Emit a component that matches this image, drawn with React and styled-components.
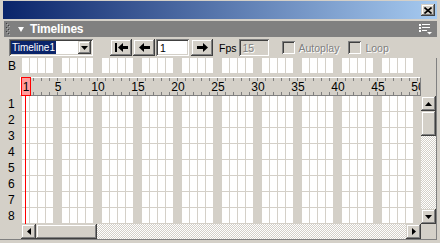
import React from 'react';
import styled, { createGlobalStyle } from 'styled-components';

const FACE = '#d4d0c8';
const SHADOW = '#808080';
const DARK = '#404040';
const FRAMES = 50;

const GlobalStyle = createGlobalStyle`
  html, body {
    margin: 0;
    padding: 0;
    background: ${FACE};
  }
  body {
    font-family: "Liberation Sans", Arial, sans-serif;
  }
  * {
    box-sizing: border-box;
  }
`;

const raised = `box-shadow: inset -1px -1px ${DARK}, inset 1px 1px ${FACE}, inset -2px -2px ${SHADOW}, inset 2px 2px #fff;`;
const sunken = `box-shadow: inset 1px 1px ${SHADOW}, inset -1px -1px #fff, inset 2px 2px ${DARK}, inset -2px -2px ${FACE};`;

const Window = styled.div`
  width: 440px;
  height: 243px;
  background: ${FACE};
  overflow: hidden;
  display: flex;
  flex-direction: column;
  padding-top: 1px;
`;

const TitleBar = styled.div`
  height: 18px;
  margin: 0 3px;
  background: linear-gradient(to right, #0a246a, #a6caf0);
  display: flex;
  align-items: center;
  justify-content: flex-end;
  padding-right: 2px;
`;

const CloseButton = styled.div`
  width: 14px;
  height: 12px;
  background: ${FACE};
  ${raised}
  display: flex;
  align-items: center;
  justify-content: center;
`;

const PanelHeader = styled.div`
  height: 16px;
  margin: 2px 3px 0 4px;
  background: ${SHADOW};
  display: flex;
  align-items: center;
  padding: 0 5px 0 2px;
`;

const Caret = styled.div`
  width: 0;
  height: 0;
  margin-left: 8px;
  border-left: 3.5px solid transparent;
  border-right: 3.5px solid transparent;
  border-top: 5px solid #fff;
`;

const PanelTitle = styled.div`
  margin-left: 6px;
  color: #fff;
  font-weight: bold;
  font-size: 12px;
  letter-spacing: -0.2px;
  flex: 1;
`;

const Toolbar = styled.div`
  height: 21px;
  display: flex;
  align-items: center;
  padding-left: 9px;
`;

const Select = styled.div`
  width: 84px;
  height: 17px;
  background: #fff;
  ${sunken}
  display: flex;
  padding: 2px;
`;

const SelectValue = styled.div`
  flex: 1;
  display: flex;
  align-items: center;
  font-size: 10px;
`;

const Highlight = styled.span`
  background: #0a246a;
  color: #fff;
  padding: 0 1px;
  line-height: 13px;
`;

const DropButton = styled.div`
  width: 13px;
  height: 13px;
  background: ${FACE};
  ${raised}
  display: flex;
  align-items: center;
  justify-content: center;
`;

const NavButton = styled.div`
  width: 22px;
  height: 17px;
  margin-left: ${(p) => p.$gap}px;
  background: ${FACE};
  ${raised}
  display: flex;
  align-items: center;
  justify-content: center;
`;

const Field = styled.div`
  width: ${(p) => p.$w}px;
  height: 17px;
  margin-left: ${(p) => p.$gap}px;
  background: ${(p) => (p.$disabled ? FACE : '#fff')};
  ${sunken}
  display: flex;
  align-items: center;
  padding-left: 4px;
  font-size: 10.5px;
  color: ${(p) => (p.$disabled ? SHADOW : '#000')};
  text-shadow: ${(p) => (p.$disabled ? '1px 1px #fff' : 'none')};
`;

const Label = styled.span`
  margin-left: ${(p) => p.$gap}px;
  font-size: 10.5px;
  color: ${(p) => (p.$disabled ? SHADOW : '#000')};
  text-shadow: ${(p) => (p.$disabled ? '1px 1px #fff' : 'none')};
`;

const Checkbox = styled.div`
  width: 13px;
  height: 13px;
  margin-left: ${(p) => p.$gap}px;
  background: ${FACE};
  ${sunken}
`;

const Body = styled.div`
  position: relative;
  display: grid;
  grid-template-columns: 22px 399px 15px;
  grid-template-rows: 16px 3px 19px 128px 15px;
  width: 437px;
  border-right: 1px solid ${SHADOW};
  border-bottom: 1px solid ${SHADOW};
`;

const RowLabel = styled.div`
  height: 16px;
  display: flex;
  align-items: center;
  padding-left: 8px;
  font-size: 12px;
  color: #000;
`;

const LabelColumn = styled.div`
  grid-column: 1;
  grid-row: ${(p) => p.$row};
  display: flex;
  flex-direction: column;
`;

const FrameStrip = styled.div`
  grid-column: 2;
  grid-row: ${(p) => p.$row};
  display: flex;
  overflow: hidden;
`;

const FrameCol = styled.div`
  width: 8px;
  flex-shrink: 0;
  border-right: 1px solid ${FACE};
  background: ${(p) =>
    p.$key ? FACE : `repeating-linear-gradient(to bottom, #fff 0 15px, ${FACE} 15px 16px)`};
`;

const Ruler = styled.div`
  grid-column: 2;
  grid-row: 3;
  margin-left: -2px;
  border: 1px solid;
  border-color: #fff ${SHADOW} ${SHADOW} #fff;
  padding-left: 1px;
  overflow: hidden;
  background: ${FACE};
`;

const tick = `linear-gradient(to right, transparent 3px, ${SHADOW} 3px 4px, transparent 4px)`;

const RulerScale = styled.div`
  display: flex;
  height: 100%;
  background-image: ${tick}, ${tick};
  background-size: 8px 3px;
  background-repeat: repeat-x;
  background-position: left top, left bottom;
`;

const RulerCell = styled.div`
  width: 8px;
  flex-shrink: 0;
  display: flex;
  align-items: center;
  justify-content: center;
  font-size: 12px;
  white-space: nowrap;
`;

const ScrollV = styled.div`
  grid-column: 3;
  grid-row: 4;
  display: flex;
  flex-direction: column;
`;

const ScrollH = styled.div`
  grid-column: 2;
  grid-row: 5;
  margin-left: -1px;
  display: flex;
`;

const ScrollButton = styled.div`
  width: 15px;
  height: 15px;
  flex-shrink: 0;
  background: ${FACE};
  ${raised}
  display: flex;
  align-items: center;
  justify-content: center;
`;

const Thumb = styled.div`
  flex-shrink: 0;
  width: ${(p) => (p.$horizontal ? '61px' : '15px')};
  height: ${(p) => (p.$horizontal ? '15px' : '25px')};
  background: ${FACE};
  ${raised}
`;

const Track = styled.div`
  flex: 1;
  background: repeating-conic-gradient(#fff 0 25%, ${FACE} 0 50%) 0 0 / 2px 2px;
`;

const PlayheadBox = styled.div`
  position: absolute;
  left: 21px;
  top: 19px;
  width: 10px;
  height: 19px;
  border: 1px solid #ff0000;
  background: #ff9c9c;
  display: flex;
  align-items: center;
  justify-content: center;
  font-size: 12px;
`;

const PlayheadLine = styled.div`
  position: absolute;
  left: 25px;
  top: 38px;
  width: 1px;
  height: 128px;
  background: #ff0000;
`;

const Grip = () => (
  <svg width="4" height="13" viewBox="0 0 4 13">
    {[0, 2, 4, 6, 8, 10].map((y, i) => (
      <g key={y}>
        <rect x={i % 2 ? 2 : 0} y={y} width="1" height="1" fill={DARK} />
        <rect x={i % 2 ? 3 : 1} y={y + 1} width="1" height="1" fill="#b0b0b0" />
      </g>
    ))}
  </svg>
);

const OptionsIcon = () => (
  <svg width="13" height="11" viewBox="0 0 13 11" fill="#fff">
    <rect x="0" y="0" width="2" height="2" />
    <rect x="3" y="0" width="8" height="1" />
    <rect x="0" y="3" width="2" height="2" />
    <rect x="3" y="3" width="8" height="1" />
    <rect x="0" y="6" width="2" height="2" />
    <rect x="3" y="6" width="5" height="1" />
    <path d="M8 8 H13 L10.5 10.5 Z" />
  </svg>
);

const CloseIcon = () => (
  <svg width="8" height="7" viewBox="0 0 8 7">
    <path d="M0.5 0.5 L7.5 6.5 M7.5 0.5 L0.5 6.5" stroke="#000" strokeWidth="1.6" />
  </svg>
);

const Triangle = ({ dir }) => {
  const d = {
    down: 'M0 0 H7 L3.5 4 Z',
    up: 'M0 4 H7 L3.5 0 Z',
    left: 'M4 0 V7 L0 3.5 Z',
    right: 'M0 0 V7 L4 3.5 Z',
  }[dir];
  const vertical = dir === 'up' || dir === 'down';
  return (
    <svg width={vertical ? 7 : 4} height={vertical ? 4 : 7} viewBox={vertical ? '0 0 7 4' : '0 0 4 7'}>
      <path d={d} fill="#000" />
    </svg>
  );
};

const FirstIcon = () => (
  <svg width="13" height="9" viewBox="0 0 13 9" fill="#000">
    <rect x="0" y="0" width="2" height="9" />
    <path d="M3 4.5 L8 0 V9 Z" />
    <rect x="8" y="3" width="5" height="3" />
  </svg>
);

const PrevIcon = () => (
  <svg width="11" height="9" viewBox="0 0 11 9" fill="#000">
    <path d="M0 4.5 L5 0 V9 Z" />
    <rect x="5" y="3" width="6" height="3" />
  </svg>
);

const NextIcon = () => (
  <svg width="11" height="9" viewBox="0 0 11 9" fill="#000">
    <path d="M11 4.5 L6 0 V9 Z" />
    <rect x="0" y="3" width="6" height="3" />
  </svg>
);

const frames = Array.from({ length: FRAMES }, (_, i) => i + 1);
const rows = [1, 2, 3, 4, 5, 6, 7, 8];

const FrameColumns = () =>
  frames.map((f) => <FrameCol key={f} $key={f % 5 === 0} />);

export default function App() {
  return (
    <>
      <GlobalStyle />
      <Window>
        <TitleBar>
          <CloseButton>
            <CloseIcon />
          </CloseButton>
        </TitleBar>

        <PanelHeader>
          <Grip />
          <Caret />
          <PanelTitle>Timelines</PanelTitle>
          <OptionsIcon />
        </PanelHeader>

        <Toolbar>
          <Select>
            <SelectValue>
              <Highlight>Timeline1</Highlight>
            </SelectValue>
            <DropButton>
              <Triangle dir="down" />
            </DropButton>
          </Select>
          <NavButton $gap={17}>
            <FirstIcon />
          </NavButton>
          <NavButton $gap={1}>
            <PrevIcon />
          </NavButton>
          <Field $w={33} $gap={1}>1</Field>
          <NavButton $gap={2}>
            <NextIcon />
          </NavButton>
          <Label $gap={6}>Fps</Label>
          <Field $w={30} $gap={2} $disabled>15</Field>
          <Checkbox $gap={13} />
          <Label $gap={4} $disabled>Autoplay</Label>
          <Checkbox $gap={9} />
          <Label $gap={4} $disabled>Loop</Label>
        </Toolbar>

        <Body>
          <LabelColumn $row={1}>
            <RowLabel>B</RowLabel>
          </LabelColumn>
          <FrameStrip $row={1}>
            <FrameColumns />
          </FrameStrip>

          <Ruler>
            <RulerScale>
              {frames.map((f) => (
                <RulerCell key={f}>{f === 1 || f % 5 === 0 ? f : ''}</RulerCell>
              ))}
            </RulerScale>
          </Ruler>

          <LabelColumn $row={4}>
            {rows.map((r) => (
              <RowLabel key={r}>{r}</RowLabel>
            ))}
          </LabelColumn>
          <FrameStrip $row={4}>
            <FrameColumns />
          </FrameStrip>

          <ScrollV>
            <ScrollButton>
              <Triangle dir="up" />
            </ScrollButton>
            <Thumb />
            <Track />
            <ScrollButton>
              <Triangle dir="down" />
            </ScrollButton>
          </ScrollV>

          <ScrollH>
            <ScrollButton>
              <Triangle dir="left" />
            </ScrollButton>
            <Thumb $horizontal />
            <Track />
            <ScrollButton>
              <Triangle dir="right" />
            </ScrollButton>
          </ScrollH>

          <PlayheadBox>1</PlayheadBox>
          <PlayheadLine />
        </Body>
      </Window>
    </>
  );
}
